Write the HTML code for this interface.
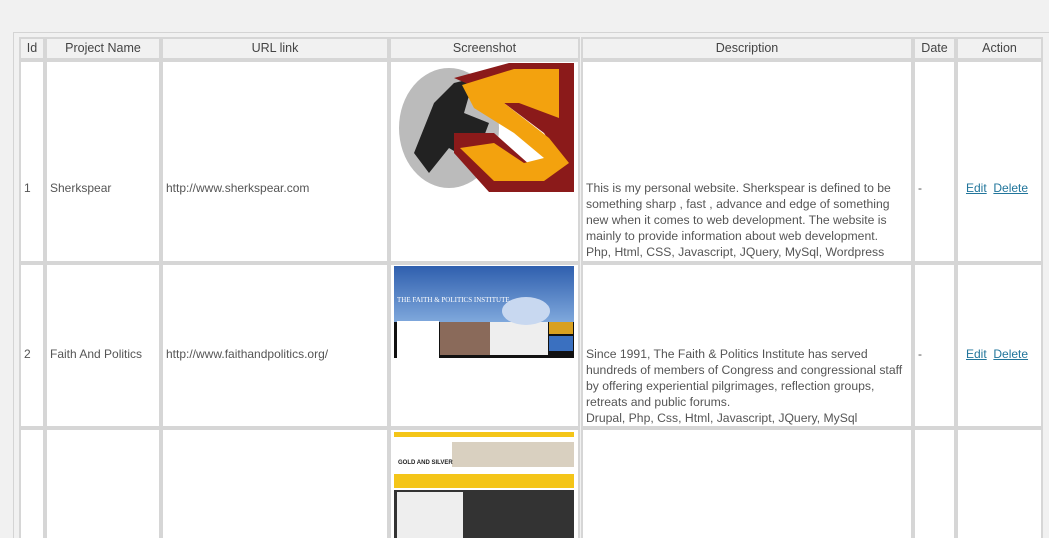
<!DOCTYPE html><html style="overflow:hidden;height:538px"><head><style>
body{margin:0;width:1049px;height:538px;background:#f1f1f1;overflow:hidden;font-family:"Liberation Sans",sans-serif;font-size:12px;color:#555;position:relative}
.box{position:absolute;left:13px;top:32px;width:1040px;height:510px;border:1px solid #d4d4d4;background:#f1f1f1}
.c{position:absolute;border:2px solid #d6d6d6;box-sizing:border-box;background:#fff}
.h{background:#f1f1f1;text-align:center;font-size:12.5px;color:#444;line-height:19px}
.t{position:absolute;line-height:16px;white-space:nowrap}
a{color:#21759b;text-decoration:underline}
</style></head><body>
<div class="box"></div>
<div class="c h" style="left:19px;top:37px;width:26px;height:23px">Id</div>
<div class="c h" style="left:45px;top:37px;width:116px;height:23px">Project Name</div>
<div class="c h" style="left:161px;top:37px;width:228px;height:23px">URL link</div>
<div class="c h" style="left:389px;top:37px;width:191px;height:23px">Screenshot</div>
<div class="c h" style="left:581px;top:37px;width:332px;height:23px">Description</div>
<div class="c h" style="left:913px;top:37px;width:43px;height:23px">Date</div>
<div class="c h" style="left:956px;top:37px;width:87px;height:23px">Action</div>
<div class="c" style="left:19px;top:60px;width:26px;height:203px"></div>
<div class="c" style="left:45px;top:60px;width:116px;height:203px"></div>
<div class="c" style="left:161px;top:60px;width:228px;height:203px"></div>
<div class="c" style="left:389px;top:60px;width:191px;height:203px"></div>
<div class="c" style="left:581px;top:60px;width:332px;height:203px"></div>
<div class="c" style="left:913px;top:60px;width:43px;height:203px"></div>
<div class="c" style="left:956px;top:60px;width:87px;height:203px"></div>
<div class="c" style="left:19px;top:263px;width:26px;height:165px"></div>
<div class="c" style="left:45px;top:263px;width:116px;height:165px"></div>
<div class="c" style="left:161px;top:263px;width:228px;height:165px"></div>
<div class="c" style="left:389px;top:263px;width:191px;height:165px"></div>
<div class="c" style="left:581px;top:263px;width:332px;height:165px"></div>
<div class="c" style="left:913px;top:263px;width:43px;height:165px"></div>
<div class="c" style="left:956px;top:263px;width:87px;height:165px"></div>
<div class="c" style="left:19px;top:428px;width:26px;height:120px"></div>
<div class="c" style="left:45px;top:428px;width:116px;height:120px"></div>
<div class="c" style="left:161px;top:428px;width:228px;height:120px"></div>
<div class="c" style="left:389px;top:428px;width:191px;height:120px"></div>
<div class="c" style="left:581px;top:428px;width:332px;height:120px"></div>
<div class="c" style="left:913px;top:428px;width:43px;height:120px"></div>
<div class="c" style="left:956px;top:428px;width:87px;height:120px"></div>
<div class="t" style="left:24px;top:180px">1</div>
<div class="t" style="left:50px;top:180px">Sherkspear</div>
<div class="t" style="left:166px;top:180px">http://www.sherkspear.com</div>
<div class="t" style="left:586px;top:180px;font-size:12.2px">This is my personal website. Sherkspear is defined to be<br>something sharp , fast , advance and edge of something<br>new when it comes to web development. The website is<br>mainly to provide information about web development.<br>Php, Html, CSS, Javascript, JQuery, MySql, Wordpress</div>
<div class="t" style="left:918px;top:180px">-</div>
<div class="t" style="left:966px;top:180px"><a>Edit</a>&nbsp;&nbsp;<a>Delete</a></div>
<svg style="position:absolute;left:394px;top:63px" width="180" height="129" viewBox="0 0 180 129">
<rect width="180" height="129" fill="#fff"/>
<ellipse cx="55" cy="65" rx="50" ry="60" fill="#bbb"/>
<path d="M20 90 L40 40 L60 20 L80 15 L70 50 L95 60 L80 100 L55 85 L35 110Z" fill="#222"/>
<path d="M60 15 L115 0 L180 0 L180 129 L95 129 L60 90 L60 70 L100 70 L145 110 L170 100 L150 70 L110 40 L95 30 Z" fill="#8b1a1a"/>
<path d="M68 22 L120 6 L165 6 L165 55 L125 40 L110 40 L155 75 L175 100 L150 118 L100 118 L66 85 L100 80 L130 100 L150 95 L120 70 L80 45 Z" fill="#f3a20e"/>
</svg>
<div class="t" style="left:24px;top:346px">2</div>
<div class="t" style="left:50px;top:346px">Faith And Politics</div>
<div class="t" style="left:166px;top:346px">http://www.faithandpolitics.org/</div>
<div class="t" style="left:586px;top:346px;font-size:12.2px">Since 1991, The Faith &amp; Politics Institute has served<br>hundreds of members of Congress and congressional staff<br>by offering experiential pilgrimages, reflection groups,<br>retreats and public forums.<br>Drupal, Php, Css, Html, Javascript, JQuery, MySql</div>
<div class="t" style="left:918px;top:346px">-</div>
<div class="t" style="left:966px;top:346px"><a>Edit</a>&nbsp;&nbsp;<a>Delete</a></div>
<svg style="position:absolute;left:394px;top:266px" width="180" height="92" viewBox="0 0 180 92">
<defs><linearGradient id="g" x1="0" y1="0" x2="0" y2="1"><stop offset="0" stop-color="#2f5fae"/><stop offset="1" stop-color="#7fa8dc"/></linearGradient></defs>
<rect width="180" height="56" fill="url(#g)"/>
<rect y="56" width="180" height="36" fill="#111"/>
<rect x="3" y="55" width="42" height="37" fill="#fff"/>
<rect x="46" y="56" width="50" height="33" fill="#8a6a5a"/>
<rect x="96" y="56" width="58" height="33" fill="#eee"/>
<rect x="155" y="56" width="24" height="12" fill="#d8a020"/>
<rect x="155" y="70" width="24" height="15" fill="#3a70c0"/>
<ellipse cx="132" cy="45" rx="24" ry="14" fill="#c8d8f0"/>
<text x="3" y="36" font-size="7" fill="#fff" font-family="Liberation Serif">THE FAITH &amp; POLITICS INSTITUTE</text>
</svg>
<svg style="position:absolute;left:394px;top:432px" width="180" height="106" viewBox="0 0 180 106">
<rect width="180" height="106" fill="#fff"/>
<rect width="180" height="5" fill="#f4c518"/>
<rect x="58" y="10" width="122" height="25" fill="#d9d0c0"/>
<text x="4" y="32" font-size="6" font-weight="bold" fill="#222">GOLD AND SILVER</text>
<rect y="42" width="180" height="14" fill="#f4c518"/>
<rect y="58" width="180" height="48" fill="#333"/>
<rect x="3" y="60" width="66" height="46" fill="#eee"/>
</svg>
</body></html>
